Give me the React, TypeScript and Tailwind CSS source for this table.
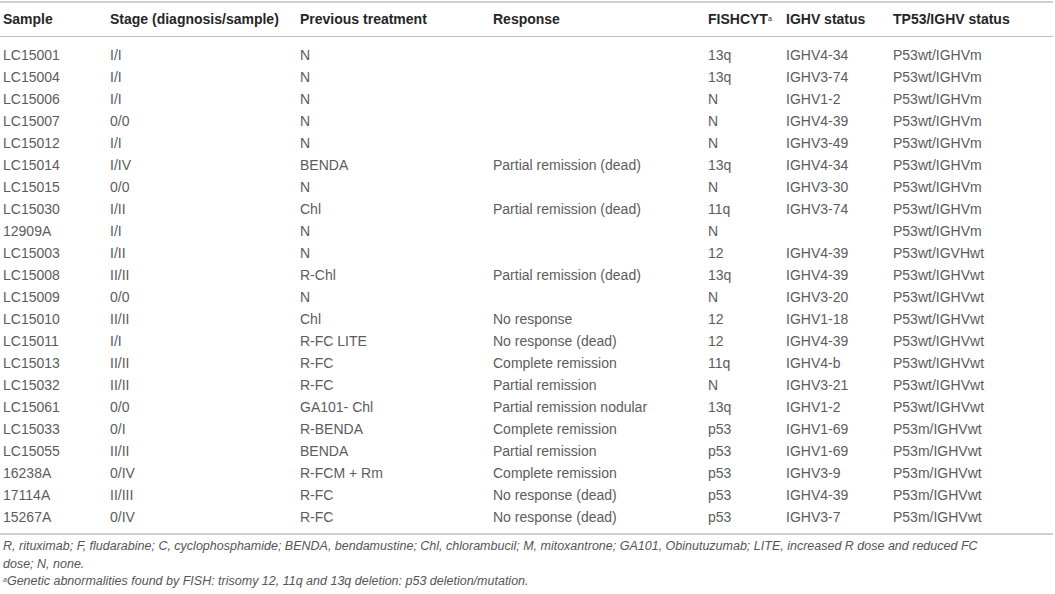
const rows: string[][] = [
  ["LC15001", "I/I", "N", "", "13q", "IGHV4-34", "P53wt/IGHVm"],
  ["LC15004", "I/I", "N", "", "13q", "IGHV3-74", "P53wt/IGHVm"],
  ["LC15006", "I/I", "N", "", "N", "IGHV1-2", "P53wt/IGHVm"],
  ["LC15007", "0/0", "N", "", "N", "IGHV4-39", "P53wt/IGHVm"],
  ["LC15012", "I/I", "N", "", "N", "IGHV3-49", "P53wt/IGHVm"],
  ["LC15014", "I/IV", "BENDA", "Partial remission (dead)", "13q", "IGHV4-34", "P53wt/IGHVm"],
  ["LC15015", "0/0", "N", "", "N", "IGHV3-30", "P53wt/IGHVm"],
  ["LC15030", "I/II", "Chl", "Partial remission (dead)", "11q", "IGHV3-74", "P53wt/IGHVm"],
  ["12909A", "I/I", "N", "", "N", "", "P53wt/IGHVm"],
  ["LC15003", "I/II", "N", "", "12", "IGHV4-39", "P53wt/IGVHwt"],
  ["LC15008", "II/II", "R-Chl", "Partial remission (dead)", "13q", "IGHV4-39", "P53wt/IGHVwt"],
  ["LC15009", "0/0", "N", "", "N", "IGHV3-20", "P53wt/IGHVwt"],
  ["LC15010", "II/II", "Chl", "No response", "12", "IGHV1-18", "P53wt/IGHVwt"],
  ["LC15011", "I/I", "R-FC LITE", "No response (dead)", "12", "IGHV4-39", "P53wt/IGHVwt"],
  ["LC15013", "II/II", "R-FC", "Complete remission", "11q", "IGHV4-b", "P53wt/IGHVwt"],
  ["LC15032", "II/II", "R-FC", "Partial remission", "N", "IGHV3-21", "P53wt/IGHVwt"],
  ["LC15061", "0/0", "GA101- Chl", "Partial remission nodular", "13q", "IGHV1-2", "P53wt/IGHVwt"],
  ["LC15033", "0/I", "R-BENDA", "Complete remission", "p53", "IGHV1-69", "P53m/IGHVwt"],
  ["LC15055", "II/II", "BENDA", "Partial remission", "p53", "IGHV1-69", "P53m/IGHVwt"],
  ["16238A", "0/IV", "R-FCM + Rm", "Complete remission", "p53", "IGHV3-9", "P53m/IGHVwt"],
  ["17114A", "II/III", "R-FC", "No response (dead)", "p53", "IGHV4-39", "P53m/IGHVwt"],
  ["15267A", "0/IV", "R-FC", "No response (dead)", "p53", "IGHV3-7", "P53m/IGHVwt"],
];

// column starts: 3, 110, 300, 493, 708, 786, 893
const cols = "grid grid-cols-[107px_190px_193px_215px_78px_107px_1fr] pl-[3px]";

export default function App() {
  return (
    <div className="w-[1055px] bg-white pt-px font-['Liberation_Sans',Arial,sans-serif]">
      <div className="w-[1053px] border-t-2 border-[#cfcfcf]">
        {/* header */}
        <div className={`${cols} h-[34px] items-center border-b border-[#bdbdbd] text-[14px] font-bold text-[#262626]`}>
          <div>Sample</div>
          <div className="whitespace-nowrap">Stage (diagnosis/sample)</div>
          <div>Previous treatment</div>
          <div>Response</div>
          <div>
            FISHCYT<sup className="text-[7px] font-normal">a</sup>
          </div>
          <div>IGHV status</div>
          <div>TP53/IGHV status</div>
        </div>

        <div className="border-b-2 border-[#cfcfcf] pt-[7px] pb-[5px] text-[14px] text-[#5c5c5c]">
          {rows.map((r) => (
            <div key={r[0]} className={`${cols} h-[22px] items-center`}>
              {r.map((c, i) => (
                <div key={i} className="whitespace-nowrap">
                  {c}
                </div>
              ))}
            </div>
          ))}
        </div>
      </div>

      <div className="pl-[3px] pt-[3px] text-[12.5px] italic leading-[17.5px] text-[#555] whitespace-nowrap">
        <p>
          R, rituximab; F, fludarabine; C, cyclophosphamide; BENDA, bendamustine; Chl, chlorambucil; M, mitoxantrone;
          GA101, Obinutuzumab; LITE, increased R dose and reduced FC
          <br />
          dose; N, none.
        </p>
        <p>
          <sup className="text-[7px]">a</sup>Genetic abnormalities found by FISH: trisomy 12, 11q and 13q deletion: p53
          deletion/mutation.
        </p>
      </div>
    </div>
  );
}
